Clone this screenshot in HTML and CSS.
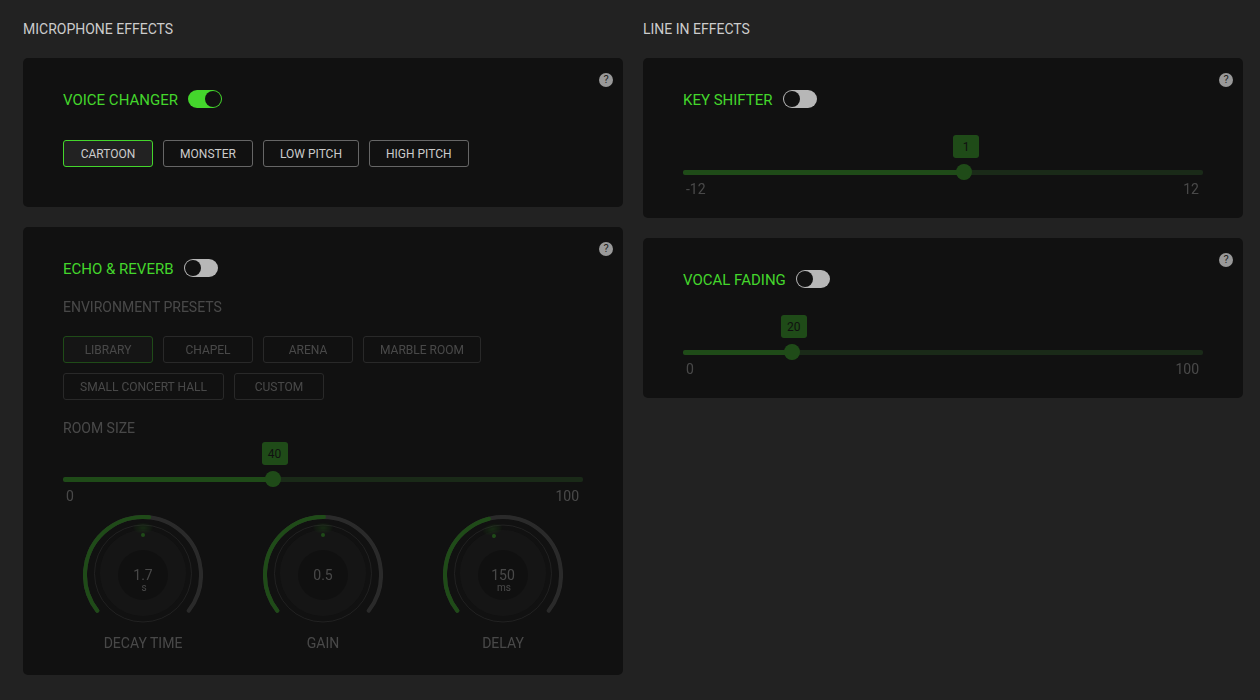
FILE: index.html
```
<!DOCTYPE html>
<html lang="en">
<head>
    <meta charset="UTF-8">
    <meta name="viewport" content="width=device-width, initial-scale=1.0">
    <title>Audio Effects</title>
    <link rel="stylesheet" href="styles.css">
</head>
<body>
<!-- Shared gradient for the knob glow -->
<svg class="defs" width="0" height="0" aria-hidden="true">
    <defs>
        <radialGradient id="glow">
            <stop offset="0" stop-color="#44d62c" stop-opacity="0.45"/>
            <stop offset="1" stop-color="#44d62c" stop-opacity="0"/>
        </radialGradient>
    </defs>
</svg>

<main class="effects">
    <section class="column">
        <h1>MICROPHONE EFFECTS</h1>

        <div class="card">
            <button class="help" type="button" aria-label="Help">?</button>
            <div class="card-title">
                <label for="voice-changer">VOICE CHANGER</label>
                <input type="checkbox" class="toggle" id="voice-changer" checked>
            </div>
            <div class="presets voice-presets">
                <button type="button" class="active">CARTOON</button>
                <button type="button">MONSTER</button>
                <button type="button">LOW PITCH</button>
                <button type="button">HIGH PITCH</button>
            </div>
        </div>

        <div class="card echo-card">
            <button class="help" type="button" aria-label="Help">?</button>
            <div class="card-title">
                <label for="echo-reverb">ECHO &amp; REVERB</label>
                <input type="checkbox" class="toggle" id="echo-reverb">
            </div>
            <div class="disabled">
                <h2>ENVIRONMENT PRESETS</h2>
                <div class="presets">
                    <button type="button" class="active" disabled>LIBRARY</button>
                    <button type="button" disabled>CHAPEL</button>
                    <button type="button" disabled>ARENA</button>
                    <button type="button" disabled>MARBLE ROOM</button>
                    <button type="button" disabled>SMALL CONCERT HALL</button>
                    <button type="button" disabled>CUSTOM</button>
                </div>

                <h2><label for="room-size">ROOM SIZE</label></h2>
                <div class="slider" style="--pos: 0.4">
                    <div class="rail">
                        <output class="tip" for="room-size">40</output>
                        <input type="range" id="room-size" min="0" max="100" value="40" disabled>
                    </div>
                    <div class="limits"><span>0</span><span>100</span></div>
                </div>

                <div class="knobs">
                    <div class="knob">
                        <div class="dial">
                            <svg viewBox="0 0 120 112" aria-hidden="true">
                                <path class="arc" d="M14.3 95.7A58 58 0 1 1 105.7 95.7"/>
                                <path class="arc-fill" pathLength="256" stroke-dasharray="134 400" d="M14.3 95.7A58 58 0 1 1 105.7 95.7"/>
                                <circle class="disc" cx="60" cy="58" r="43"/>
                                <circle class="ring" cx="60" cy="58.5" r="48.5"/>
                                <circle class="core" cx="60" cy="60" r="25"/>
                                <ellipse class="glow" cx="60" cy="13" rx="11" ry="6"/>
                                <circle class="dot" cx="60" cy="20" r="2"/>
                                <text class="value" x="60" y="65">1.7</text>
                                <text class="unit" x="61" y="76">s</text>
                            </svg>
                            <input type="range" id="decay" min="0.1" max="3.1" step="0.1" value="1.7" disabled>
                        </div>
                        <label for="decay">DECAY TIME</label>
                    </div>
                    <div class="knob">
                        <div class="dial">
                            <svg viewBox="0 0 120 112" aria-hidden="true">
                                <path class="arc" d="M14.3 95.7A58 58 0 1 1 105.7 95.7"/>
                                <path class="arc-fill" pathLength="256" stroke-dasharray="129 400" d="M14.3 95.7A58 58 0 1 1 105.7 95.7"/>
                                <circle class="disc" cx="60" cy="58" r="43"/>
                                <circle class="ring" cx="60" cy="58.5" r="48.5"/>
                                <circle class="core" cx="60" cy="60" r="25"/>
                                <ellipse class="glow" cx="60" cy="13" rx="11" ry="6"/>
                                <circle class="dot" cx="60" cy="20" r="2"/>
                                <text class="value" x="60" y="65">0.5</text>
                            </svg>
                            <input type="range" id="gain" min="0" max="1" step="0.1" value="0.5" disabled>
                        </div>
                        <label for="gain">GAIN</label>
                    </div>
                    <div class="knob">
                        <div class="dial">
                            <svg viewBox="0 0 120 112" aria-hidden="true">
                                <path class="arc" d="M14.3 95.7A58 58 0 1 1 105.7 95.7"/>
                                <path class="arc-fill" pathLength="256" stroke-dasharray="114 400" d="M14.3 95.7A58 58 0 1 1 105.7 95.7"/>
                                <circle class="disc" cx="60" cy="58" r="43"/>
                                <circle class="ring" cx="60" cy="58.5" r="48.5"/>
                                <circle class="core" cx="60" cy="60" r="25"/>
                                <g transform="rotate(-13 60 60)">
                                    <ellipse class="glow" cx="60" cy="13" rx="11" ry="6"/>
                                    <circle class="dot" cx="60" cy="20" r="2"/>
                                </g>
                                <text class="value" x="60" y="65">150</text>
                                <text class="unit" x="61" y="76">ms</text>
                            </svg>
                            <input type="range" id="delay" min="0" max="330" value="150" disabled>
                        </div>
                        <label for="delay">DELAY</label>
                    </div>
                </div>
            </div>
        </div>
    </section>

    <section class="column">
        <h1>LINE IN EFFECTS</h1>

        <div class="card slider-card">
            <button class="help" type="button" aria-label="Help">?</button>
            <div class="card-title">
                <label for="key-shifter">KEY SHIFTER</label>
                <input type="checkbox" class="toggle" id="key-shifter">
            </div>
            <div class="slider disabled" style="--pos: 0.5417">
                <div class="rail">
                    <output class="tip" for="key">1</output>
                    <input type="range" id="key" aria-label="Key" min="-12" max="12" value="1" disabled>
                </div>
                <div class="limits"><span>-12</span><span>12</span></div>
            </div>
        </div>

        <div class="card slider-card">
            <button class="help" type="button" aria-label="Help">?</button>
            <div class="card-title">
                <label for="vocal-fading">VOCAL FADING</label>
                <input type="checkbox" class="toggle" id="vocal-fading">
            </div>
            <div class="slider disabled" style="--pos: 0.2">
                <div class="rail">
                    <output class="tip" for="fading">20</output>
                    <input type="range" id="fading" aria-label="Fading" min="0" max="100" value="20" disabled>
                </div>
                <div class="limits"><span>0</span><span>100</span></div>
            </div>
        </div>
    </section>
</main>
</body>
</html>
```
FILE: styles.css
```
* {
    box-sizing: border-box;
}

body {
    margin: 0;
    background: #222;
    color: #ccc;
    font-family: Roboto, "Liberation Sans", sans-serif;
    font-size: 14px;
    line-height: 20px;
}

.defs {
    position: absolute;
}

.effects {
    display: grid;
    grid-template-columns: 1fr 1fr;
    gap: 20px;
    align-items: start;
    padding: 19px 17px 25px 23px;
}

h1, h2 {
    margin: 0;
    font-size: 14px;
    font-weight: 400;
}

h1 {
    margin-bottom: 19px;
}

h2 {
    margin-top: 18px;
}

/* Cards */
.card {
    position: relative;
    padding: 30px 40px 40px;
    border-radius: 5px;
    background: #111;
}

.card + .card {
    margin-top: 20px;
}

.echo-card {
    padding-bottom: 22px;
}

.slider-card {
    padding-bottom: 20px;
}

.card-title {
    display: flex;
    align-items: center;
    gap: 10px;
    height: 22px;
    color: #44d62c;
    font-size: 15px;
}

.card-title label {
    padding-top: 2px;
}

.help {
    position: absolute;
    top: 15px;
    right: 10px;
    width: 14px;
    height: 14px;
    padding: 0;
    border: none;
    border-radius: 50%;
    background: #999;
    color: #222;
    font-family: inherit;
    font-size: 11px;
    line-height: 14px;
    cursor: pointer;
}

.disabled {
    opacity: 0.3;
}

/* Toggle switch */
.toggle {
    appearance: none;
    width: 34px;
    height: 18px;
    margin: 0;
    padding: 1px;
    border-radius: 9px;
    background: #b7b7b7;
    cursor: pointer;
}

.toggle::before {
    content: "";
    display: block;
    width: 16px;
    height: 16px;
    border-radius: 50%;
    background: #111;
}

.toggle:checked {
    background: #44d62c;
}

.toggle:checked::before {
    margin-left: auto;
}

/* Preset buttons */
.presets {
    display: flex;
    flex-wrap: wrap;
    gap: 10px;
    margin-top: 19px;
}

.voice-presets {
    margin-top: 30px;
}

.presets button {
    min-width: 90px;
    height: 27px;
    padding: 0 16px;
    border: 1px solid #666;
    border-radius: 3px;
    background: transparent;
    color: #ccc;
    font-family: inherit;
    font-size: 12px;
}

.presets .active {
    border-color: #44d62c;
    background: #222;
}

/* Sliders */
.slider {
    padding-top: 33px;
}

.slider-card .slider {
    margin-top: 21px;
}

.rail {
    position: relative;
    height: 16px;
}

.rail input {
    appearance: none;
    display: block;
    width: 100%;
    height: 16px;
    margin: 0;
    background: transparent;
}

.rail input::-webkit-slider-runnable-track {
    height: 5px;
    border-radius: 2px;
    background: linear-gradient(to right, #44d62c calc(var(--pos) * 100%), #32682c 0);
}

.rail input::-webkit-slider-thumb {
    appearance: none;
    width: 16px;
    height: 16px;
    margin-top: -6px;
    border-radius: 50%;
    background: #44d62c;
}

.tip {
    position: absolute;
    bottom: 22px;
    left: calc(var(--pos) * (100% - 16px) + 10px);
    width: 26px;
    height: 23px;
    transform: translateX(-50%);
    border-radius: 3px;
    background: #44d62c;
    color: #111;
    font-size: 12px;
    line-height: 24px;
    text-align: center;
}

.limits {
    display: flex;
    justify-content: space-between;
    padding: 0 4px 0 3px;
    line-height: 18px;
}

/* Knobs */
.knobs {
    display: flex;
    gap: 60px;
    margin: 10px 20px 0;
}

.knob {
    width: 120px;
    text-align: center;
}

.dial {
    position: relative;
    margin-bottom: 6px;
}

.dial svg {
    display: block;
    width: 100%;
}

.dial input {
    position: absolute;
    inset: 0;
    width: 100%;
    height: 100%;
    margin: 0;
    opacity: 0;
}

.arc, .arc-fill {
    fill: none;
    stroke: #6a6a6a;
    stroke-width: 4;
    stroke-linecap: round;
}

.arc-fill {
    stroke: #44d62c;
}

.disc {
    fill: #222;
}

.ring {
    fill: none;
    stroke: #4a4a4a;
}

.core {
    fill: #111;
}

.glow {
    fill: url(#glow);
}

.dot {
    fill: #44d62c;
}

.value, .unit {
    fill: #ccc;
    font-size: 14px;
    text-anchor: middle;
}

.unit {
    font-size: 10px;
}
```
